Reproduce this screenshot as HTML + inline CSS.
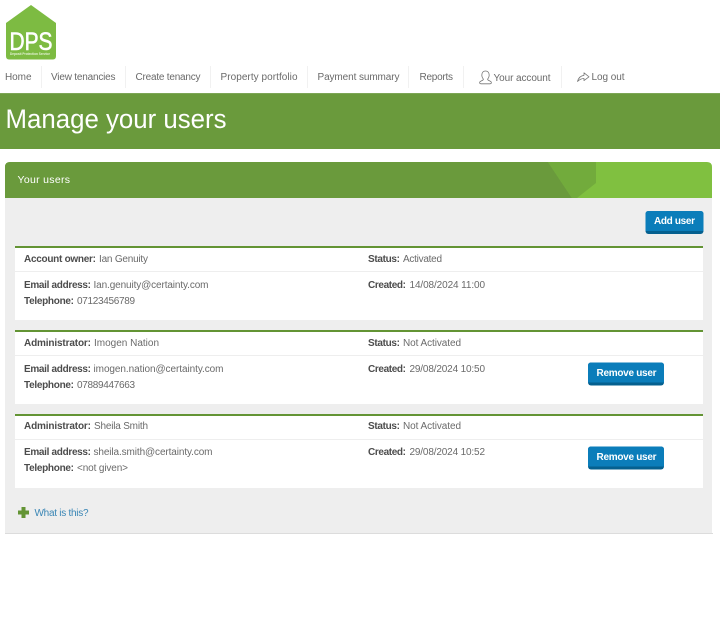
<!DOCTYPE html>
<html lang="en"><head><meta charset="utf-8"><title>Manage your users</title>
<style>
html,body{margin:0;padding:0;background:#fff;width:720px;height:643px;overflow:hidden}
svg{display:block}
text{font-family:"Liberation Sans",sans-serif;font-size:10px;fill:#666}
.n{font-size:10px;fill:#6a6a6a}
.b{font-weight:bold;fill:#4c4c4c}
.v{fill:#6a6a6a}
.w{fill:#fff;font-weight:bold;font-size:10px}
</style></head><body>
<svg xmlns="http://www.w3.org/2000/svg" width="720" height="643" viewBox="0 0 720 643">
<rect width="720" height="643" fill="#fff"/>
<!-- logo -->
<path d="M31 5 L56 23 V56 Q56 59.500 53 59.500 H9 Q6 59.500 6 56 V23 Z" fill="#7dbb42"/>
<text x="9.500" y="50" textLength="43" lengthAdjust="spacingAndGlyphs" style="font-size:25px;font-weight:normal;fill:#fff;stroke:#fff;stroke-width:.6">DPS</text>
<text x="10" y="55.200" textLength="40" lengthAdjust="spacingAndGlyphs" style="font-size:3.400px;font-weight:bold;fill:#e4f2d6">Deposit Protection Service</text>
<!-- nav -->
<g fill="#f1f1f1">
<rect x="41" y="66" width="1" height="22"/><rect x="125" y="66" width="1" height="22"/><rect x="210" y="66" width="1" height="22"/><rect x="307" y="66" width="1" height="22"/><rect x="408" y="66" width="1" height="22"/><rect x="463" y="66" width="1" height="22"/><rect x="561" y="66" width="1" height="22"/>
</g>
<g class="nav">
<text class="n" x="5" y="80" textLength="26.500">Home</text>
<text class="n" x="51" y="80" textLength="64.500">View tenancies</text>
<text class="n" x="135.500" y="80" textLength="65">Create tenancy</text>
<text class="n" x="220.500" y="80" textLength="77">Property portfolio</text>
<text class="n" x="317.500" y="80" textLength="82">Payment summary</text>
<text class="n" x="419.500" y="80" textLength="33.500">Reports</text>
<text class="n" x="493.500" y="81" textLength="57">Your account</text>
<text class="n" x="591.500" y="80" textLength="33">Log out</text>
</g>
<!-- user icon -->
<path d="M485.500 71 C482.800 71 481.800 73.200 481.800 75.300 C481.800 77.300 482.800 78.300 483.400 79.200 C483.400 80.500 480.500 80.800 479.800 82 C479.300 83 479.800 83.800 481 83.800 H490 C491.200 83.800 491.700 83 491.200 82 C490.500 80.800 487.600 80.500 487.600 79.200 C488.200 78.300 489.200 77.300 489.200 75.300 C489.200 73.200 488.200 71 485.500 71 Z" fill="none" stroke="#777" stroke-width=".8"/>
<!-- share icon -->
<path d="M584 72.800 L589 76.800 L584 80.600 V78.500 C581.500 78.500 579.500 79.500 577.500 81.500 C578.300 78.300 580.500 75.800 584 75.300 Z" fill="none" stroke="#777" stroke-width=".8" stroke-linejoin="round"/>
<!-- page title band -->
<rect x="0" y="93" width="720" height="56" fill="#6a9a3c"/>
<rect x="0" y="93" width="720" height="1" fill="#7da656"/>
<text x="5.500" y="128" textLength="221" lengthAdjust="spacingAndGlyphs" style="font-size:27px;fill:#fff">Manage your users</text>
<!-- panel -->
<rect x="5" y="198" width="707" height="335" fill="#eeeeee"/>
<rect x="5" y="533" width="708" height="1" fill="#dcdcdc"/>
<path d="M5 198 V167 Q5 162 10 162 H707 Q712 162 712 167 V198 Z" fill="#80c040"/>
<path d="M5 198 V167 Q5 162 10 162 H548 L572 198 Z" fill="#6a9a3c"/>
<path d="M548 162 H596 V183 L577 198 H572 Z" fill="#72ab3c"/>
<text x="17.500" y="183" textLength="52.500" style="font-size:10.500px;fill:#fff">Your users</text>
<!-- add user -->
<rect x="645.500" y="211" width="58" height="23" rx="3" fill="#05608f"/>
<path d="M645.500 214 Q645.500 211 648.500 211 H700.500 Q703.500 211 703.500 214 V231 H645.500 Z" fill="#0b7dba"/>
<text class="w" x="654" y="224" textLength="41">Add user</text>

<!-- card 1 -->
<rect x="15" y="246" width="688" height="74" fill="#fff"/>
<rect x="15" y="246" width="688" height="2" fill="#639434"/>
<rect x="15" y="271" width="688" height="1" fill="#eeeeee"/>
<text class="b" x="24" y="262" textLength="72">Account owner:</text>
<text class="v" x="99" y="262" textLength="49">Ian Genuity</text>
<text class="b" x="368" y="262" textLength="32">Status:</text>
<text class="v" x="403" y="262" textLength="39">Activated</text>
<text class="b" x="24" y="288" textLength="67">Email address:</text>
<text class="v" x="93.500" y="288" textLength="115">Ian.genuity@certainty.com</text>
<text class="b" x="24" y="304" textLength="50">Telephone:</text>
<text class="v" x="77" y="304" textLength="58">07123456789</text>
<text class="b" x="368" y="288" textLength="38">Created:</text>
<text class="v" x="409.500" y="288" textLength="75.500">14/08/2024 11:00</text>

<!-- card 2 -->
<rect x="15" y="330" width="688" height="74" fill="#fff"/>
<rect x="15" y="330" width="688" height="2" fill="#639434"/>
<rect x="15" y="355" width="688" height="1" fill="#eeeeee"/>
<text class="b" x="24" y="346" textLength="67">Administrator:</text>
<text class="v" x="94" y="346" textLength="65">Imogen Nation</text>
<text class="b" x="368" y="346" textLength="32">Status:</text>
<text class="v" x="403" y="346" textLength="58">Not Activated</text>
<text class="b" x="24" y="372" textLength="67">Email address:</text>
<text class="v" x="93.500" y="372" textLength="130">imogen.nation@certainty.com</text>
<text class="b" x="24" y="388" textLength="50">Telephone:</text>
<text class="v" x="77" y="388" textLength="58">07889447663</text>
<text class="b" x="368" y="372" textLength="38">Created:</text>
<text class="v" x="409.500" y="372" textLength="75.500">29/08/2024 10:50</text>
<rect x="588" y="362.500" width="76" height="23" rx="3" fill="#05608f"/>
<path d="M588 365.500 Q588 362.500 591 362.500 H661 Q664 362.500 664 365.500 V382.500 H588 Z" fill="#0b7dba"/>
<text class="w" x="596.500" y="376" textLength="60">Remove user</text>

<!-- card 3 -->
<rect x="15" y="414" width="688" height="74" fill="#fff"/>
<rect x="15" y="414" width="688" height="2" fill="#639434"/>
<rect x="15" y="439" width="688" height="1" fill="#eeeeee"/>
<text class="b" x="24" y="429" textLength="67">Administrator:</text>
<text class="v" x="94" y="429" textLength="54">Sheila Smith</text>
<text class="b" x="368" y="429" textLength="32">Status:</text>
<text class="v" x="403" y="429" textLength="58">Not Activated</text>
<text class="b" x="24" y="455" textLength="67">Email address:</text>
<text class="v" x="93.500" y="455" textLength="119">sheila.smith@certainty.com</text>
<text class="b" x="24" y="471" textLength="50">Telephone:</text>
<text class="v" x="77" y="471" textLength="51">&lt;not given&gt;</text>
<text class="b" x="368" y="455" textLength="38">Created:</text>
<text class="v" x="409.500" y="455" textLength="75.500">29/08/2024 10:52</text>
<rect x="588" y="446.500" width="76" height="23" rx="3" fill="#05608f"/>
<path d="M588 449.500 Q588 446.500 591 446.500 H661 Q664 446.500 664 449.500 V466.500 H588 Z" fill="#0b7dba"/>
<text class="w" x="596.500" y="460" textLength="60">Remove user</text>

<!-- what is this -->
<path d="M21.500 507 H25.500 V510.500 H29 V514.500 H25.500 V518 H21.500 V514.500 H18 V510.500 H21.500 Z" fill="#639434"/>
<text x="34.500" y="516" textLength="54" style="fill:#3a86b5">What is this?</text>
</svg>
</body></html>
